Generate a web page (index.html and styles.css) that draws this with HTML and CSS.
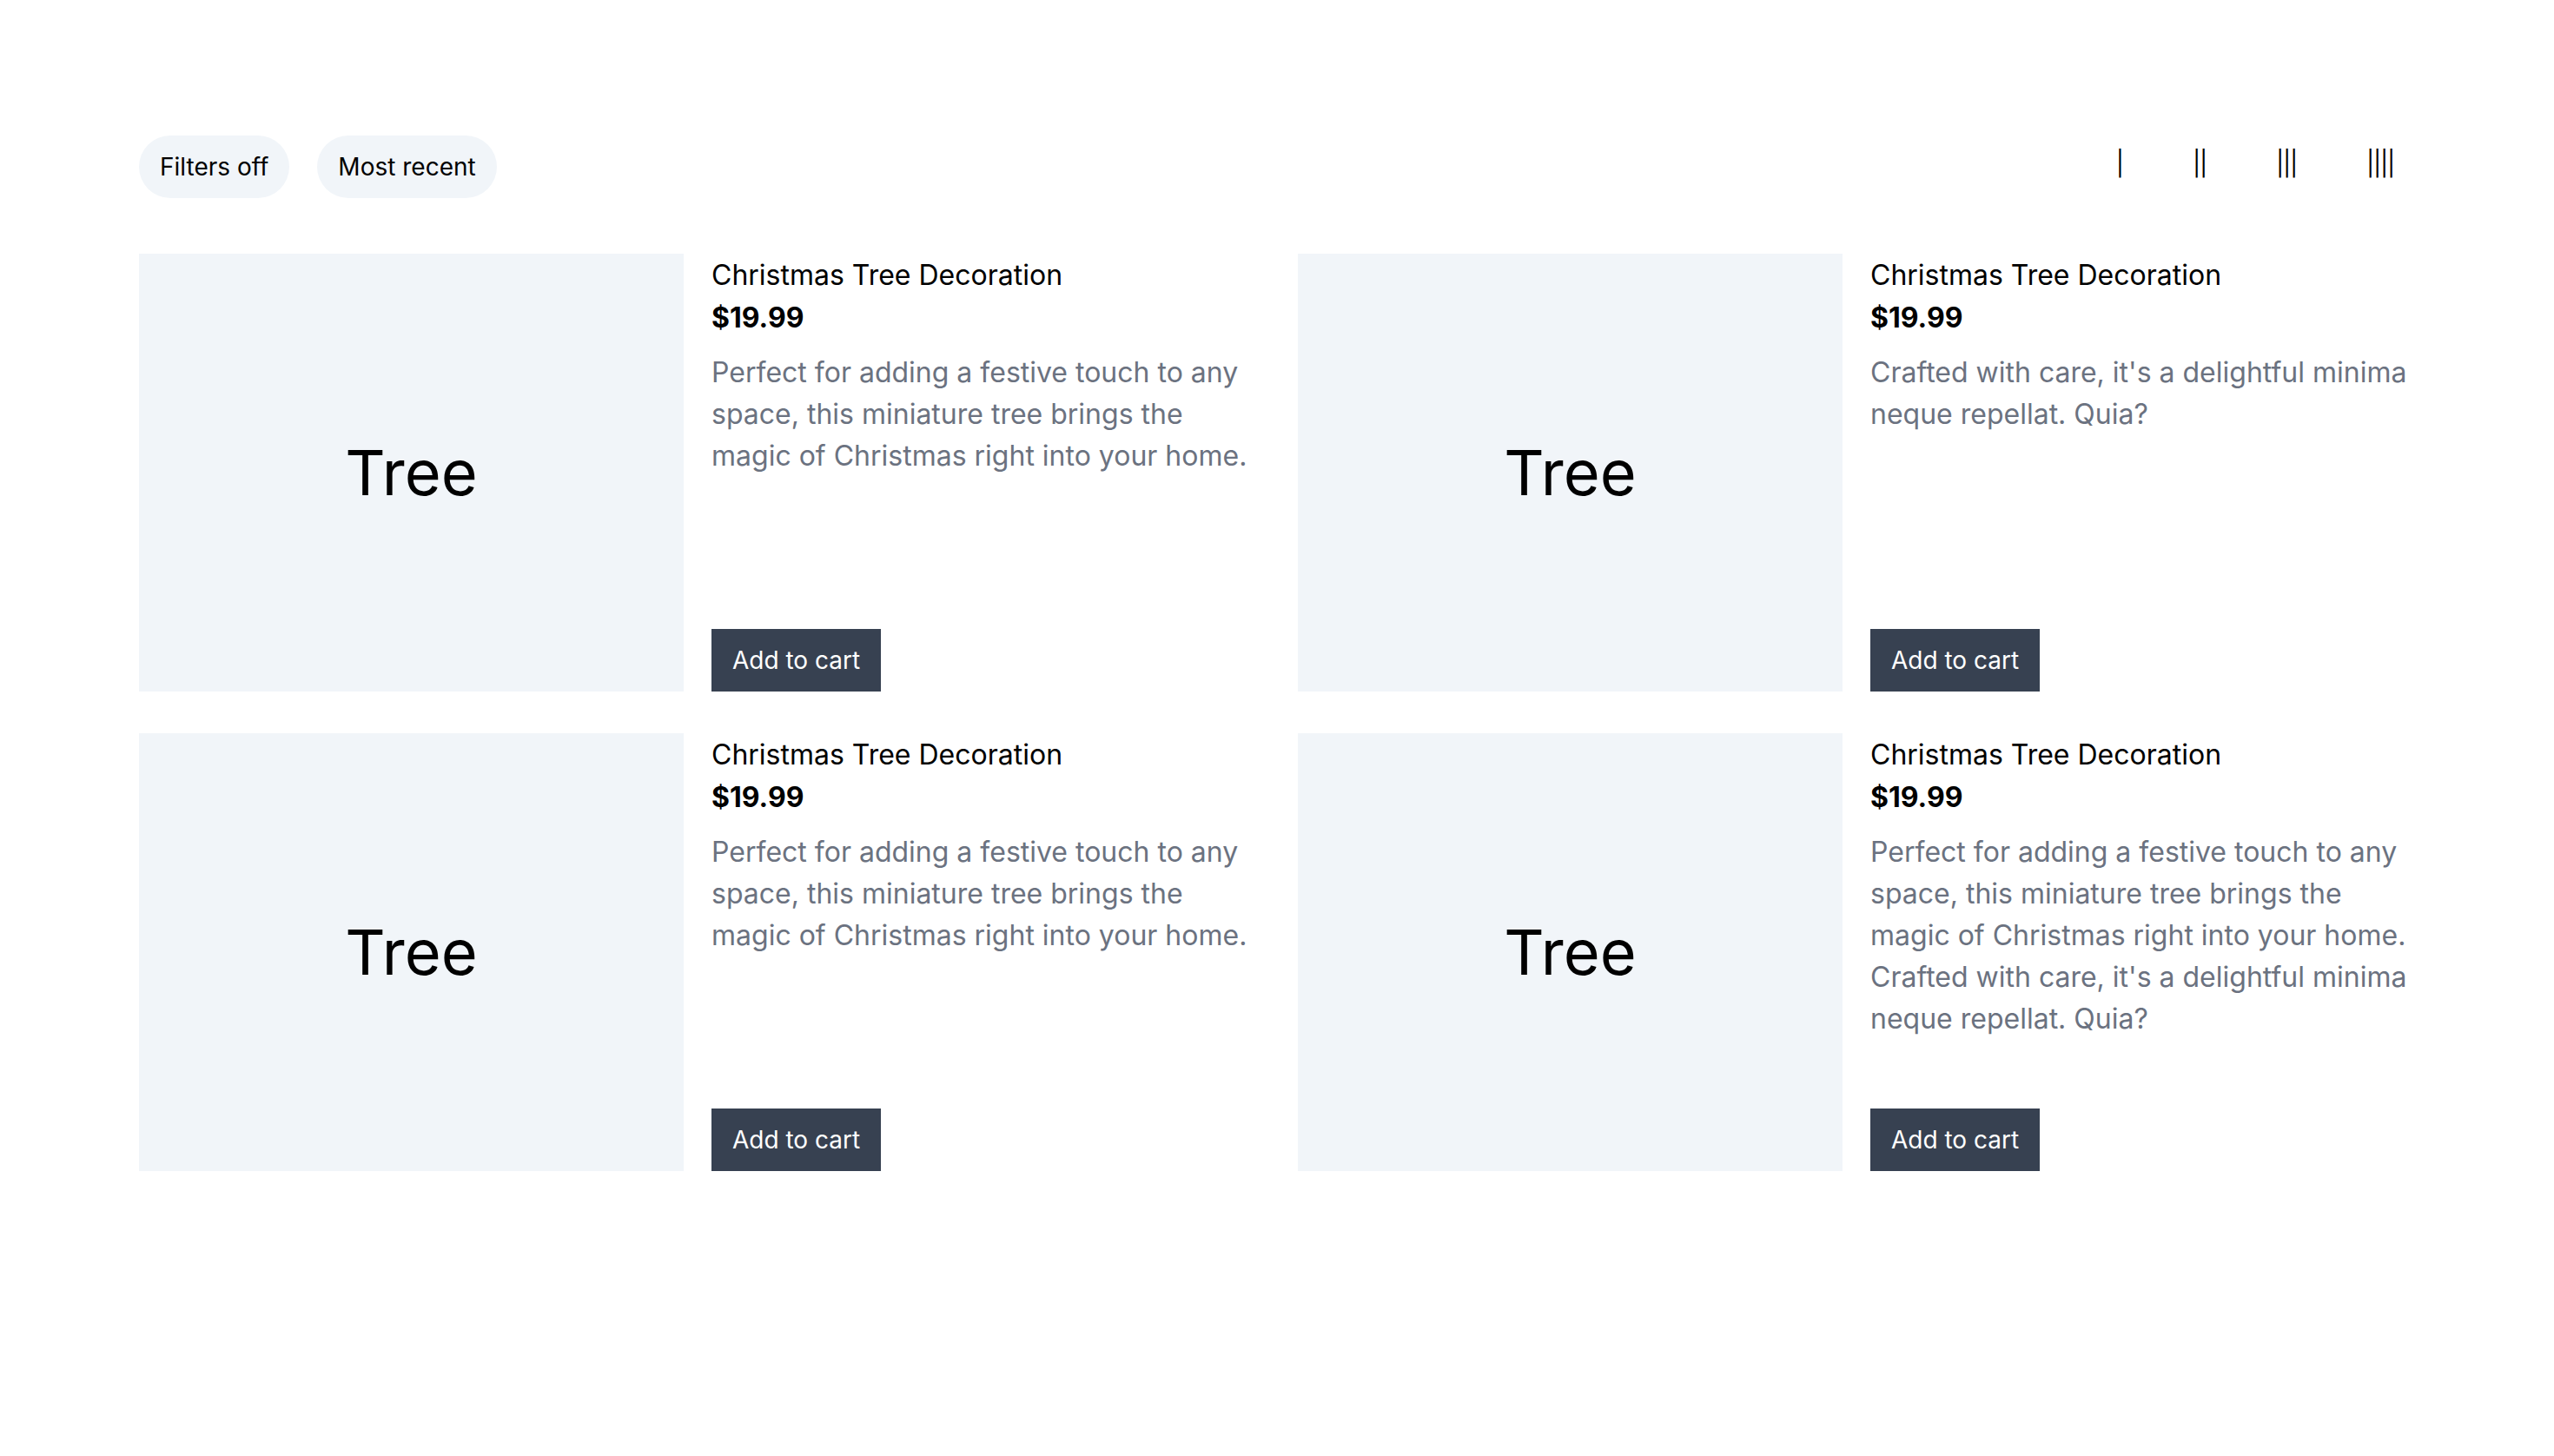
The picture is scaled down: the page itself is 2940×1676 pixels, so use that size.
FILE: index.html
```html
<!DOCTYPE html>
<html lang="en">
<head>
<meta charset="utf-8">
<title>Products</title>
<link rel="stylesheet" href="styles.css">
</head>
<body>
<main class="page">
  <div class="toolbar">
    <div class="chips">
      <button class="chip">Filters off</button>
      <button class="chip">Most recent</button>
    </div>
    <div class="views">
      <button class="view">|</button>
      <button class="view">||</button>
      <button class="view">|||</button>
      <button class="view">||||</button>
    </div>
  </div>
  <div class="grid">
    <article class="card">
      <div class="thumb">Tree</div>
      <div class="info">
        <h2 class="title">Christmas Tree Decoration</h2>
        <p class="price">$19.99</p>
        <p class="desc">Perfect for adding a festive touch to any space, this miniature tree brings the magic of Christmas right into your home.</p>
        <button class="cart">Add to cart</button>
      </div>
    </article>
    <article class="card">
      <div class="thumb">Tree</div>
      <div class="info">
        <h2 class="title">Christmas Tree Decoration</h2>
        <p class="price">$19.99</p>
        <p class="desc">Crafted with care, it's a delightful minima neque repellat. Quia?</p>
        <button class="cart">Add to cart</button>
      </div>
    </article>
    <article class="card">
      <div class="thumb">Tree</div>
      <div class="info">
        <h2 class="title">Christmas Tree Decoration</h2>
        <p class="price">$19.99</p>
        <p class="desc">Perfect for adding a festive touch to any space, this miniature tree brings the magic of Christmas right into your home.</p>
        <button class="cart">Add to cart</button>
      </div>
    </article>
    <article class="card">
      <div class="thumb">Tree</div>
      <div class="info">
        <h2 class="title">Christmas Tree Decoration</h2>
        <p class="price">$19.99</p>
        <p class="desc">Perfect for adding a festive touch to any space, this miniature tree brings the magic of Christmas right into your home. Crafted with care, it's a delightful minima neque repellat. Quia?</p>
        <button class="cart">Add to cart</button>
      </div>
    </article>
  </div>
</main>
</body>
</html>
```
FILE: styles.css
```css
* { box-sizing: border-box; }
html, body { margin: 0; padding: 0; background: #ffffff; }
body {
  font-family: Inter, "Liberation Sans", sans-serif;
  color: #000000;
}
button { font-family: inherit; cursor: pointer; }
.page {
  padding: 156px 160px;
}
.toolbar {
  display: flex;
  justify-content: space-between;
  align-items: center;
}
.chips, .views {
  display: flex;
  gap: 32px;
  align-items: center;
}
.chip {
  border: none;
  background: #f1f5f9;
  border-radius: 9999px;
  padding: 16px 24px;
  font-size: 28px;
  line-height: 40px;
  color: #000000;
}
.view {
  border: none;
  background: transparent;
  padding: 12px 24px 20px;
  font-size: 28px;
  line-height: 40px;
  letter-spacing: -1.3px;
  color: #000000;
}
.grid {
  margin-top: 64px;
  display: grid;
  grid-template-columns: 1fr 1fr;
  column-gap: 48px;
  row-gap: 48px;
}
.card {
  display: grid;
  grid-template-columns: 1fr 1fr;
  gap: 32px;
}
.thumb {
  height: 504px;
  background: #f1f5f9;
  display: flex;
  align-items: center;
  justify-content: center;
  font-size: 72px;
  line-height: 80px;
}
.info {
  display: flex;
  flex-direction: column;
  align-items: flex-start;
}
.title {
  margin: 0;
  font-size: 32px;
  line-height: 48px;
  font-weight: 400;
  padding-top: 1px;
}
.price {
  margin: 0;
  font-size: 32px;
  line-height: 48px;
  font-weight: 700;
  padding-top: 1px;
}
.desc {
  margin: 15px 0 0;
  font-size: 32px;
  line-height: 48px;
  color: #6b7280;
}
.cart {
  margin-top: auto;
  border: none;
  background: #374151;
  color: #ffffff;
  padding: 16px 24px;
  font-size: 28px;
  line-height: 40px;
}
```
